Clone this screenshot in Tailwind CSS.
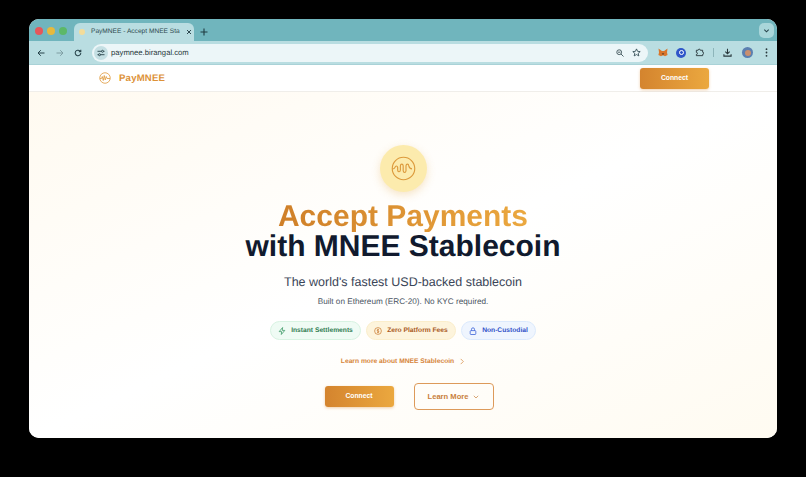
<!DOCTYPE html>
<html lang="en">
<head>
  <meta charset="UTF-8" />
  <title>PayMNEE - Accept MNEE Stablecoin</title>
  <script src="https://cdn.jsdelivr.net/npm/@tailwindcss/browser@4"></script>
</head>
<body class="bg-black font-['Liberation_Sans',Arial,sans-serif] antialiased [text-rendering:geometricPrecision] w-[806px] h-[477px] overflow-hidden">
  <div class="ml-[29px] mt-[19px] w-[748px] h-[419px] rounded-[10px] overflow-hidden flex flex-col bg-white">

    <!-- tab strip -->
    <div class="h-[22px] bg-[#70b5bd] flex items-end shrink-0">
      <div class="flex gap-[4px] pl-[6px] pb-[6px] w-[45px]">
        <span class="w-[8px] h-[8px] rounded-full bg-[#e5575a]"></span>
        <span class="w-[8px] h-[8px] rounded-full bg-[#e6b93d]"></span>
        <span class="w-[8px] h-[8px] rounded-full bg-[#5cb868]"></span>
      </div>
      <div class="w-[120px] h-[18px] bg-[#b9dde1] rounded-t-[6px] flex items-center pl-[5px] pr-[5px] gap-[6px]">
        <span class="w-[6px] h-[6px] rounded-full bg-[#f3dc9a] shrink-0"></span>
        <span class="text-[6.6px] text-[#2f4a50] flex-1 whitespace-nowrap">PayMNEE - Accept MNEE Sta</span>
        <svg class="w-[6px] h-[6px] shrink-0" viewBox="0 0 6 6" fill="none" stroke="#2f4a50" stroke-width="1"><path d="M1 1l4 4M5 1L1 5"/></svg>
      </div>
      <svg class="w-[8px] h-[8px] ml-[6px] mb-[5px]" viewBox="0 0 8 8" fill="none" stroke="#1f3a40" stroke-width="1.1"><path d="M4 .5v7M.5 4h7"/></svg>
      <div class="ml-auto mr-[3px] mb-[3px] w-[15px] h-[15px] rounded-[5px] bg-[#a9d6da] flex items-center justify-center">
        <svg class="w-[7px] h-[7px]" viewBox="0 0 8 8" fill="none" stroke="#27434a" stroke-width="1.2"><path d="M1.5 3L4 5.5 6.5 3"/></svg>
      </div>
    </div>

    <!-- toolbar -->
    <div class="h-[24px] bg-[#b9dde1] flex items-center shrink-0 pl-[8px] pr-[6px] border-b border-[#a9d2d7]">
      <svg class="w-[8px] h-[8px]" viewBox="0 0 8 8" fill="none" stroke="#27434a" stroke-width="1"><path d="M7.5 4H1M3.8 1.2L1 4l2.8 2.8"/></svg>
      <svg class="w-[8px] h-[8px] ml-[11px]" viewBox="0 0 8 8" fill="none" stroke="#7f9ea3" stroke-width="1"><path d="M.5 4H7M4.2 1.2L7 4 4.2 6.8"/></svg>
      <svg class="w-[8px] h-[8px] ml-[10px]" viewBox="0 0 10 10" fill="none" stroke="#27434a" stroke-width="1.3"><path d="M8.5 5A3.5 3.5 0 1 1 7.4 2.4L8.5 3.5M8.5 1v2.5H6"/></svg>
      <div class="ml-[10px] w-[556px] h-[18px] rounded-full bg-[#ecf6f8] flex items-center pl-[2px] pr-[7px]">
        <span class="w-[14px] h-[14px] rounded-full bg-[#c4dfe3] flex items-center justify-center">
          <svg class="w-[8px] h-[8px]" viewBox="0 0 8 8" fill="none" stroke="#27434a" stroke-width=".9"><path d="M0.5 2.3h4M6.5 2.3h1M0.5 5.7h1M3.5 5.7h4"/><circle cx="5.5" cy="2.3" r="1"/><circle cx="2.5" cy="5.7" r="1"/></svg>
        </span>
        <span class="ml-[3px] text-[7.7px] text-[#27363a]">paymnee.birangal.com</span>
        <svg class="ml-auto w-[8px] h-[8px]" viewBox="0 0 8 8" fill="none" stroke="#3b5157" stroke-width=".9"><circle cx="3.2" cy="3.2" r="2.4"/><path d="M5 5l2.5 2.5M2 3.2h2.4"/></svg>
        <svg class="ml-[8px] w-[9px] h-[9px]" viewBox="0 0 10 10" fill="none" stroke="#27434a" stroke-width=".9"><path d="M5 1l1.2 2.7 2.9.3-2.2 1.9.7 2.9L5 7.3 2.4 8.8l.7-2.9L.9 4l2.9-.3z"/></svg>
      </div>
      <svg class="ml-[10px] w-[10px] h-[9px]" viewBox="0 0 10 9"><path d="M.5.5l3.4 2.4h2.2L9.5.5 9 4.5 9.6 7 7 8.2 5.6 7.4H4.4L3 8.2.4 7 1 4.5z" fill="#d9762a"/><path d="M3.7 5l1.3.6L6.3 5 5 7.2z" fill="#5b3b24"/></svg>
      <span class="ml-[8px] w-[10px] h-[10px] rounded-full bg-[#2f56c9] flex items-center justify-center"><span class="w-[5px] h-[5px] rounded-full border border-white"></span></span>
      <svg class="ml-[9px] w-[9px] h-[9px]" viewBox="0 0 10 10" fill="none" stroke="#27363a" stroke-width="1"><path d="M1.5 2.5h2a1.2 1.2 0 0 1 2.4 0h2.6v2.2a1.2 1.2 0 0 1 0 2.4v1.4H1.5V7.2a1.2 1.2 0 0 0 0-2.4z"/></svg>
      <span class="ml-[9px] w-px h-[9px] bg-[#8db5ba]"></span>
      <svg class="ml-[9px] w-[9px] h-[9px]" viewBox="0 0 10 10" fill="none" stroke="#27363a" stroke-width="1.2"><path d="M5 .8v5.4M2.6 4L5 6.4 7.4 4M1 7v2h8V7"/></svg>
      <span class="ml-[10px] w-[11px] h-[11px] rounded-full bg-[#5b7fb0] flex items-center justify-center overflow-hidden"><span class="w-[6px] h-[6px] rounded-full bg-[#c98f6e]"></span></span>
      <svg class="ml-[12px] w-[3px] h-[9px]" viewBox="0 0 3 9" fill="#27363a"><circle cx="1.5" cy="1.2" r=".9"/><circle cx="1.5" cy="4.5" r=".9"/><circle cx="1.5" cy="7.8" r=".9"/></svg>
    </div>

    <!-- site nav -->
    <div class="h-[27px] bg-white border-b border-[#f0eeea] flex items-center pl-[70px] pr-[68px] shrink-0">
      <svg class="w-[12px] h-[12px]" viewBox="0 0 24 24" fill="none" stroke="#e09a3e" stroke-width="1.6"><circle cx="12" cy="12" r="10.5"/><path d="M2 13h3l1.5-4 2 8 2-10 2 9 2-7 1.5 4H22" stroke-linejoin="round"/></svg>
      <span class="ml-[8px] mt-[2px] text-[9.6px] font-bold text-[#dd9238] tracking-[0.2px]">PayMNEE</span>
      <button class="ml-auto w-[69px] h-[21px] pt-[1px] rounded-[3px] bg-linear-to-r from-[#d4842e] to-[#eba83f] text-white text-[6.8px] font-bold shadow-[0_1px_3px_rgba(217,137,50,0.4)]">Connect</button>
    </div>

    <!-- hero -->
    <div class="flex-1 flex flex-col items-center bg-linear-to-br from-[#fffaf0] via-white to-[#fffbf1]">
      <div class="mt-[53px] w-[47px] h-[47px] rounded-full bg-[#fcebad] flex items-center justify-center shadow-[0_3px_8px_rgba(226,170,80,0.3)]">
        <svg class="w-[25px] h-[25px]" viewBox="0 0 24 24" fill="none" stroke="#dc9a3c" stroke-width="1.1"><circle cx="12" cy="12" r="10.8"/><path d="M1.2 12.5c1.6 0 2.2-.4 2.6-1.6.6-1.8 2.2-1.8 2.6 0v2.6c.3 2.2 2.4 2.2 2.6 0V9.5c.2-2.2 2.5-2.2 2.7 0v4.6c.2 2.2 2.5 2.2 2.7 0V9.5c.2-2.2 2.5-2.2 2.7 0 .3 1.8 1.2 2.8 3.1 2.8" stroke-linejoin="round"/></svg>
      </div>
      <h1 class="mt-[10px] text-[30px] leading-[30px] font-bold text-center flex flex-col items-center">
        <span class="bg-linear-to-r from-[#cf7f28] to-[#eba83f] bg-clip-text text-transparent">Accept Payments</span>
        <span class="text-[#111a2e]">with MNEE Stablecoin</span>
      </h1>
      <p class="mt-[12px] text-[12.5px] leading-[16px] text-[#3a4557]">The world's fastest USD-backed stablecoin</p>
      <p class="mt-[6px] text-[8.2px] leading-[12px] text-[#4b5563]">Built on Ethereum (ERC-20). No KYC required.</p>
      <div class="mt-[13px] flex gap-[5px]">
        <span class="h-[19px] w-[91px] pt-[2px] rounded-full bg-[#effbf4] border border-[#d8f3e2] flex items-center justify-center gap-[5px] text-[6.7px] font-bold text-[#2f7d52]">
          <svg class="w-[8px] h-[8px] -mt-[2px]" viewBox="0 0 8 8" fill="none" stroke="#3f9a68" stroke-width=".8"><path d="M4.6.5L1.2 4.6h2.4l-.3 2.9 3.5-4.1H4.3z"/></svg>Instant Settlements</span>
        <span class="h-[19px] w-[90px] pt-[2px] rounded-full bg-[#fdf4dc] border border-[#fbeecb] flex items-center justify-center gap-[5px] text-[6.7px] font-bold text-[#a9591c]">
          <svg class="w-[8px] h-[8px] -mt-[2px]" viewBox="0 0 8 8" fill="none" stroke="#c9772c" stroke-width=".7"><circle cx="4" cy="4" r="3.4"/><path d="M5 2.9C4.7 2.5 3.2 2.4 3.1 3.2S5 3.9 4.9 4.8 3.3 5.5 3 5.1M4 1.9v4.2"/></svg>Zero Platform Fees</span>
        <span class="h-[19px] w-[75px] pt-[2px] rounded-full bg-[#eff5fe] border border-[#dceafd] flex items-center justify-center gap-[5px] text-[6.7px] font-bold text-[#2f50c8]">
          <svg class="w-[8px] h-[8px] -mt-[2px]" viewBox="0 0 8 8" fill="none" stroke="#3b62d8" stroke-width=".8"><rect x="1.2" y="3.6" width="5.6" height="3.9" rx=".8"/><path d="M2.5 3.6V2.3a1.5 1.5 0 0 1 3 0v1.3"/></svg>Non-Custodial</span>
      </div>
      <div class="mt-[17px] flex items-center gap-[5px] text-[6.7px] leading-[10px] font-bold text-[#d6853a]">
        Learn more about MNEE Stablecoin
        <svg class="w-[6px] h-[7px] -mt-[2px]" viewBox="0 0 6 8" fill="none" stroke="#d6853a" stroke-width=".8"><path d="M1.5 1L4.5 4 1.5 7"/></svg>
      </div>
      <div class="mt-[16px] ml-[12px] flex items-center gap-[20px]">
        <button class="w-[69px] h-[21px] rounded-[3px] bg-linear-to-r from-[#d4842e] to-[#eba83f] text-white text-[6.8px] font-bold shadow-[0_1px_3px_rgba(217,137,50,0.4)]">Connect</button>
        <button class="w-[80px] h-[27px] rounded-[4px] border border-[#dd9a5a] flex items-center justify-center gap-[5px] text-[7.6px] font-bold text-[#c9803c]">Learn More
          <svg class="w-[6px] h-[6px]" viewBox="0 0 6 6" fill="none" stroke="#c9803c" stroke-width=".7"><path d="M.8 1.8L3 4l2.2-2.2"/></svg>
        </button>
      </div>
    </div>
  </div>
</body>
</html>
